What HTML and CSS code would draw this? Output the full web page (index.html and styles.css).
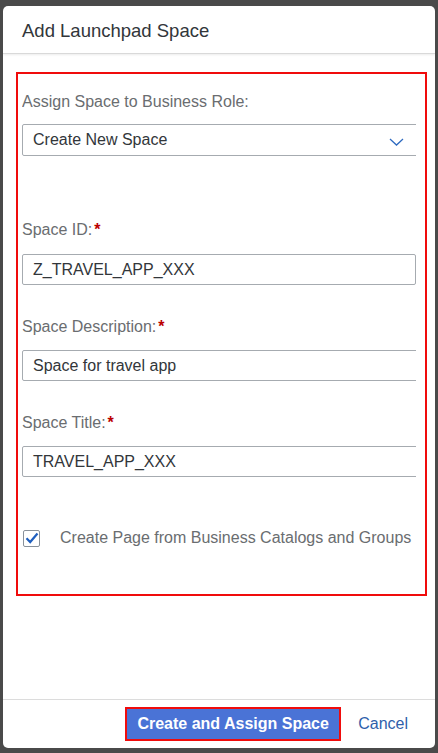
FILE: index.html
```html
<!DOCTYPE html>
<html>
<head>
<meta charset="utf-8">
<link rel="stylesheet" href="styles.css">
</head>
<body>
<div class="dialog">
  <div class="header"><h1 class="title">Add Launchpad Space</h1></div>
  <div class="content">
    <div class="highlight">
      <div class="clip">
        <div class="field first">
          <label class="label">Assign Space to Business Role:</label>
          <div class="select wide">
            <span class="value">Create New Space</span>
            <svg class="chev" width="15" height="8" viewBox="0 0 15 8"><path d="M1 1 L7.5 7 L14 1" fill="none" stroke="#2f6bc0" stroke-width="1.3"/></svg>
          </div>
        </div>
        <div class="field id">
          <label class="label">Space ID:<span class="req">*</span></label>
          <div class="input">Z_TRAVEL_APP_XXX</div>
        </div>
        <div class="field">
          <label class="label">Space Description:<span class="req">*</span></label>
          <div class="input wide">Space for travel app</div>
        </div>
        <div class="field">
          <label class="label">Space Title:<span class="req">*</span></label>
          <div class="input wide">TRAVEL_APP_XXX</div>
        </div>
        <div class="check-row">
          <span class="checkbox"><svg width="14" height="12" viewBox="0 0 14 12"><path d="M1.5 6.2 L5.2 10 L12.5 1.5" fill="none" stroke="#1f5fbf" stroke-width="2.2"/></svg></span>
          <span class="check-label">Create Page from Business Catalogs and Groups</span>
        </div>
      </div>
    </div>
  </div>
  <div class="footer">
    <button class="btn-primary">Create and Assign Space</button>
    <button class="btn-link">Cancel</button>
  </div>
</div>
</body>
</html>
```
FILE: styles.css
```css
html, body {
  margin: 0;
  padding: 0;
  background: #4a4a4a;
  width: 438px;
  height: 753px;
  overflow: hidden;
  font-family: "Liberation Sans", Arial, sans-serif;
}
.dialog {
  margin: 6px 3px 0 3px;
  height: 742px;
  background: #fff;
  border-radius: 5px;
  display: flex;
  flex-direction: column;
  overflow: hidden;
}
.header {
  height: 47px;
  border-bottom: 1px solid #d9d9d9;
  box-shadow: 0 1px 2px rgba(0,0,0,0.08);
  display: flex;
  align-items: center;
  padding-left: 19px;
}
.title {
  margin: 0 0 0 0;
  padding-top: 2px;
  font-size: 18.5px;
  font-weight: normal;
  color: #32363a;
}
.content {
  flex: 1;
  padding: 18px 0 0 13px;
}
.highlight {
  border: 2px solid #f00c0c;
  padding: 0 9px 0 4px;
  box-sizing: border-box;
  width: 411px;
}
.clip {
  overflow: hidden;
  padding-bottom: 46px;
}
.field {
  display: flex;
  flex-direction: column;
}
.label {
  height: 20px;
  line-height: 20px;
  font-size: 16px;
  color: #6a6d70;
  margin-top: 32px;
  margin-bottom: 13px;
}
.field.first .label { margin-top: 18px; margin-bottom: 12px; }
.field.id .label { margin-top: 64px; margin-bottom: 14px; }
.req {
  color: #bb0000;
  font-weight: bold;
  margin-left: 2px;
}
.input, .select {
  height: 31px;
  box-sizing: border-box;
  border: 1px solid #a6abb0;
  border-radius: 2px;
  font-size: 16px;
  color: #32363a;
  display: flex;
  align-items: center;
  padding-left: 10px;
  width: 394px;
}
.select { height: 32px; position: relative; }
.wide { width: 410px; }
.chev {
  position: absolute;
  left: 366px;
  top: 13px;
}
.check-row {
  margin-top: 51px;
  height: 20px;
  display: flex;
  align-items: center;
  white-space: nowrap;
}
.checkbox {
  width: 17px;
  height: 17px;
  box-sizing: border-box;
  border: 1px solid #89919a;
  border-radius: 2px;
  margin-left: 1px;
  display: flex;
  align-items: center;
  justify-content: center;
  flex: none;
}
.check-label {
  margin-left: 20px;
  font-size: 16px;
  color: #6a6d70;
}
.footer {
  margin-top: auto;
  height: 48px;
  border-top: 1px solid #dcdcdc;
  display: flex;
  align-items: center;
  justify-content: flex-end;
  padding-right: 27px;
}
.btn-primary {
  height: 34px;
  width: 216px;
  box-sizing: border-box;
  border: 2px solid #f00c0c;
  background: #4a73d6;
  color: #fff;
  font-family: inherit;
  font-weight: bold;
  font-size: 16px;
  padding: 0;
}
.btn-link {
  background: none;
  border: none;
  font-family: inherit;
  font-size: 16px;
  color: #2f5fab;
  margin-left: 17px;
  padding: 0;
}
```
